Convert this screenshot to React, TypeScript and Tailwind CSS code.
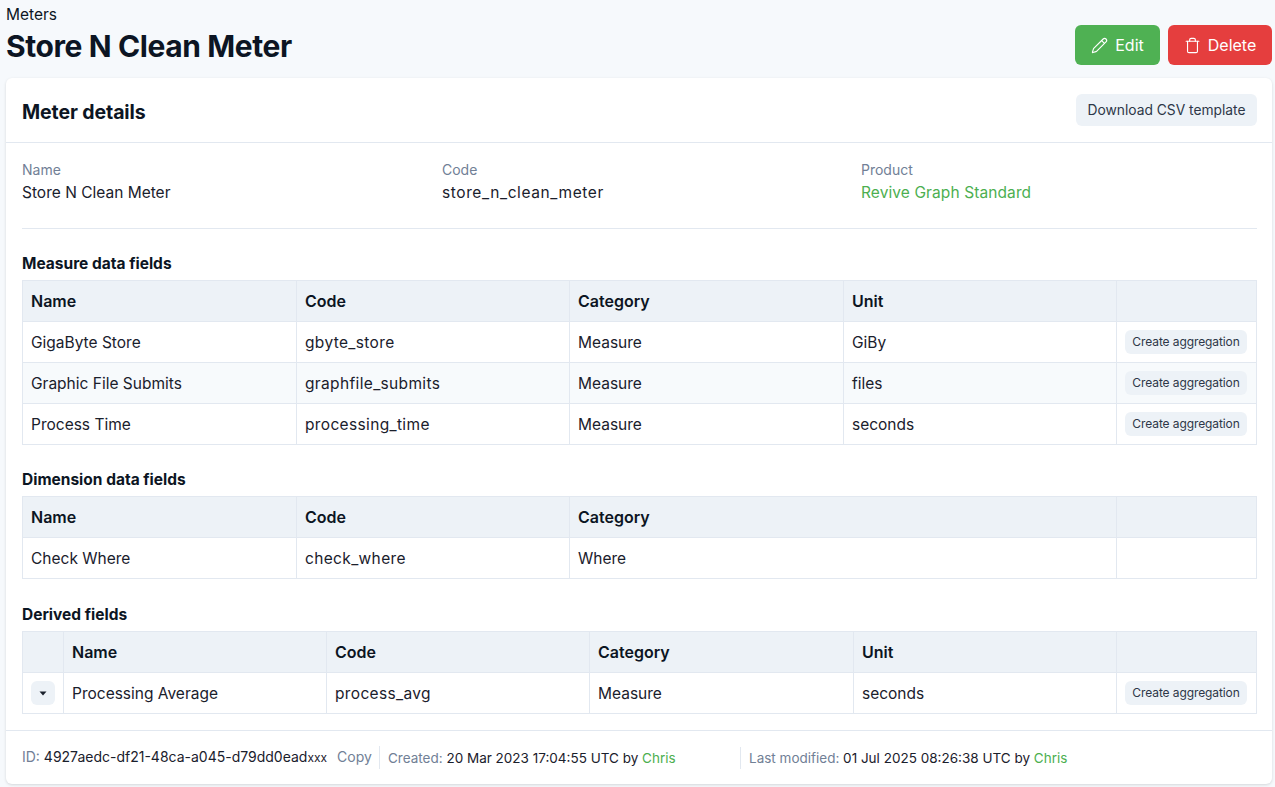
import { Pencil, Trash } from "lucide-react";

const font = "font-['Inter','Noto_Sans',sans-serif]";

type Row = { cells: string[]; action?: boolean };

function AggButton() {
  return (
    <button className="ml-auto block h-6 w-[122px] rounded-md bg-[#edf2f7] text-[12px] tracking-[-0.1px] text-[#2d3748]">
      Create aggregation
    </button>
  );
}

function FieldTable({
  head,
  rows,
  widths,
  expander,
}: {
  head: string[];
  rows: Row[];
  widths: string[];
  expander?: boolean;
}) {
  return (
    <table className="w-full table-fixed border-collapse text-[15.5px] text-[#1a202c]">
      <colgroup>
        {expander && <col className="w-[41px]" />}
        {widths.map((w, i) => (
          <col key={i} style={{ width: w }} />
        ))}
        <col className="w-[140px]" />
      </colgroup>
      <thead>
        <tr className="h-[41px] bg-[#edf2f7]">
          {expander && <th className="border border-[#e2e8f0]" />}
          {head.map((h) => (
            <th key={h} className="border border-[#e2e8f0] px-2 text-left text-[16px] font-semibold text-[#0c1523]">
              {h}
            </th>
          ))}
          <th className="border border-[#e2e8f0]" />
        </tr>
      </thead>
      <tbody>
        {rows.map((r, idx) => (
          <tr key={r.cells[0]} className={idx === 1 ? "h-[41px] bg-[#f7fafc]" : "h-[41px]"}>
            {expander && (
              <td className="border border-[#e2e8f0]">
                <button className="mx-auto flex h-6 w-6 items-center justify-center rounded-md bg-[#edf2f7]">
                  <svg width="8" height="5" viewBox="0 0 8 5">
                    <path d="M0.5 0.5h7L4 4.5z" fill="#1a202c" />
                  </svg>
                </button>
              </td>
            )}
            {r.cells.map((c, i) => (
              <td key={i} className={i === 1 ? "border border-[#e2e8f0] px-2 pt-px tracking-[0.35px]" : "border border-[#e2e8f0] px-2 pt-px"}>
                {c}
              </td>
            ))}
            <td className="border border-[#e2e8f0] pr-[9px]">{r.action && <AggButton />}</td>
          </tr>
        ))}
      </tbody>
    </table>
  );
}

export default function App() {
  return (
    <div className={`${font} h-[787px] w-[1275px] overflow-hidden bg-[#f6f9fc] pl-1.5 pr-[3px]`}>
      <div className="flex h-[78px] items-start justify-between">
        <div>
          <div className="pt-[6px] text-[15.5px] leading-[18px] text-[#0c1523]">Meters</div>
          <h1 className="mt-[3px] text-[30px] leading-[38px] font-bold tracking-[-0.4px] text-[#0c1523]">
            Store N Clean Meter
          </h1>
        </div>
        <div className="mt-[25px] flex gap-2">
          <button className="flex h-10 w-[85px] items-center justify-center gap-[7px] rounded-md bg-[#4fb153] text-[16px] text-white">
            <Pencil size={17} strokeWidth={1.6} />
            Edit
          </button>
          <button className="flex h-10 w-[104px] items-center justify-center gap-[7px] rounded-md bg-[#e53e3e] text-[16px] text-white">
            <Trash size={17} strokeWidth={1.6} />
            Delete
          </button>
        </div>
      </div>

      <div className="h-[706px] rounded-md bg-white shadow-[0_1px_3px_rgba(0,0,0,0.14)]">
        <div className="flex h-[65px] items-center justify-between border-b border-[#e2e8f0] pl-4 pr-[15px]">
          <h2 className="pt-[6px] text-[19.5px] font-bold tracking-[-0.1px] text-[#0c1523]">Meter details</h2>
          <button className="h-8 w-[181px] rounded-md bg-[#edf2f7] text-[13.8px] text-[#2d3748]">
            Download CSV template
          </button>
        </div>

        <div className="px-4">
          <div className="-mr-px grid h-[86px] grid-cols-[420px_419px_1fr] border-b border-[#e2e8f0] pt-[17px] text-[15.5px] leading-5 text-[#1a202c]">
            <div>
              <div className="text-[14px] leading-5 text-[#718096]">Name</div>
              <div className="mt-[3px]">Store N Clean Meter</div>
            </div>
            <div>
              <div className="text-[14px] leading-5 text-[#718096]">Code</div>
              <div className="mt-[3px] tracking-[0.6px]">store_n_clean_meter</div>
            </div>
            <div>
              <div className="text-[14px] leading-5 text-[#718096]">Product</div>
              <div className="mt-[3px] tracking-[0.1px] text-[#4caf50]">Revive Graph Standard</div>
            </div>
          </div>

          <h3 className="mt-[25px] mb-[6px] text-[15.5px] leading-5 font-bold text-[#0c1523]">Measure data fields</h3>
          <FieldTable
            head={["Name", "Code", "Category", "Unit"]}
            widths={["274px", "273px", "274px", "273px"]}
            rows={[
              { cells: ["GigaByte Store", "gbyte_store", "Measure", "GiBy"], action: true },
              { cells: ["Graphic File Submits", "graphfile_submits", "Measure", "files"], action: true },
              { cells: ["Process Time", "processing_time", "Measure", "seconds"], action: true },
            ]}
          />

          <h3 className="mt-[25px] mb-[6px] text-[15.5px] leading-5 font-bold text-[#0c1523]">Dimension data fields</h3>
          <FieldTable
            head={["Name", "Code", "Category"]}
            widths={["274px", "273px", "547px"]}
            rows={[{ cells: ["Check Where", "check_where", "Where"] }]}
          />

          <h3 className="mt-[26px] mb-[6px] text-[15.5px] leading-5 font-bold text-[#0c1523]">Derived fields</h3>
          <FieldTable
            expander
            head={["Name", "Code", "Category", "Unit"]}
            widths={["263px", "263px", "264px", "263px"]}
            rows={[{ cells: ["Processing Average", "process_avg", "Measure", "seconds"], action: true }]}
          />
        </div>

        <div className="mt-4 flex h-[54px] items-center border-t border-[#e2e8f0] pl-4 text-[13.5px] text-[#1a202c]">
          <div className="w-[358px] shrink-0 whitespace-nowrap border-r border-[#e2e8f0] text-[14px] leading-[22px]">
            <span className="text-[#718096]">ID: </span>
            4927aedc-df21-48ca-a045-d79dd0ead
            <span className="text-[12px]">xxx</span>
            <span className="ml-[10px] text-[#718096]">Copy</span>
          </div>
          <div className="w-[361px] shrink-0 whitespace-nowrap border-r border-[#e2e8f0] pl-2 leading-[22px]">
            <span className="text-[#718096]">Created: </span>
            20 Mar 2023 17:04:55 UTC by <span className="text-[#4caf50]">Chris</span>
          </div>
          <div className="whitespace-nowrap pl-2 leading-[22px]">
            <span className="text-[#718096]">Last modified: </span>
            01 Jul 2025 08:26:38 UTC by <span className="text-[#4caf50]">Chris</span>
          </div>
        </div>
      </div>
    </div>
  );
}
